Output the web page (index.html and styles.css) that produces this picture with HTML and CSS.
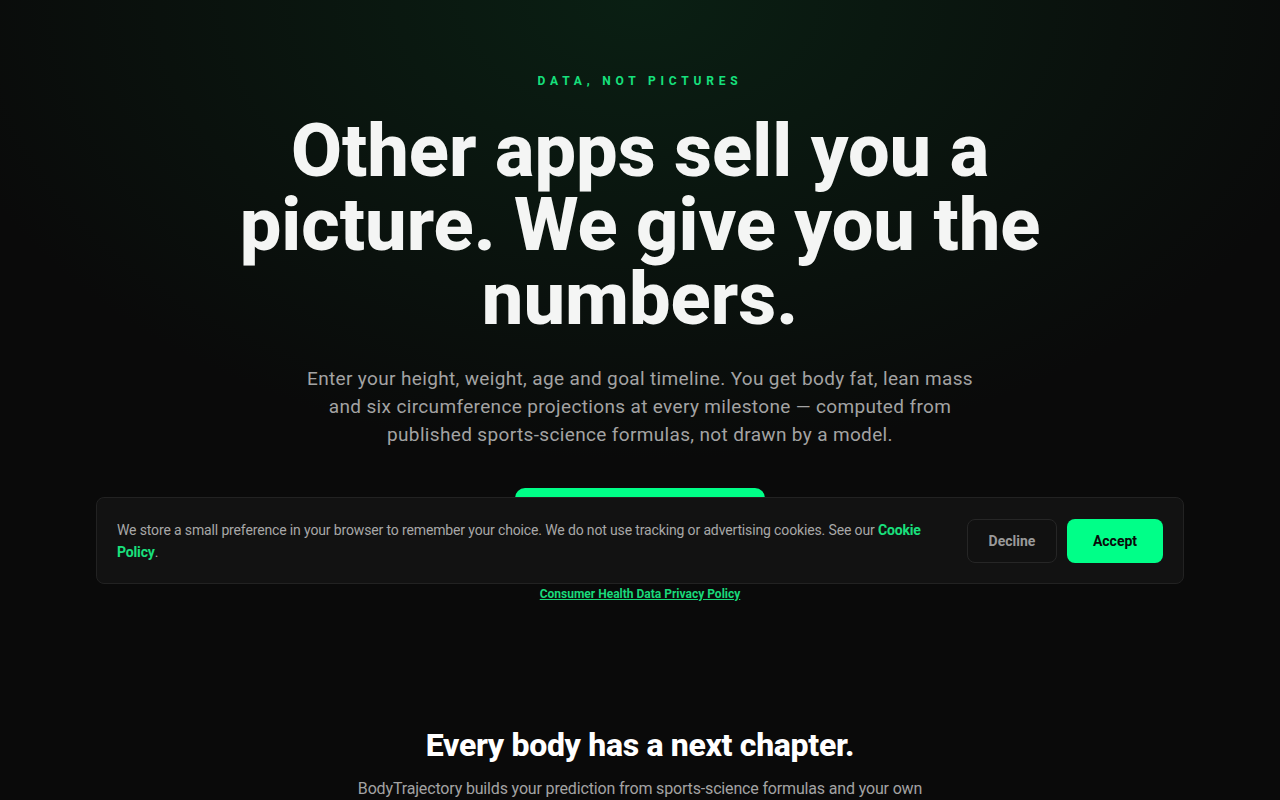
FILE: index.html
```html
<!DOCTYPE html>
<html lang="en">
<head>
<meta charset="utf-8">
<title>BodyTrajectory</title>
<link rel="stylesheet" href="styles.css">
</head>
<body>
<main class="page">
  <section class="hero">
    <p class="eyebrow">DATA, NOT PICTURES</p>
    <h1 class="headline">Other apps sell you a picture. We give you the numbers.</h1>
    <p class="lead">Enter your height, weight, age and goal timeline. You get body fat, lean mass and six circumference projections at every milestone — computed from published sports-science formulas, not drawn by a model.</p>
    <a class="cta" href="#">Get my projection</a>
    <a class="privacy-link" href="#">Consumer Health Data Privacy Policy</a>
  </section>
  <section class="chapter">
    <h2 class="chapter-title">Every body has a next chapter.</h2>
    <p class="chapter-text">BodyTrajectory builds your prediction from sports-science formulas and your own measurements, so every milestone is grounded in numbers you can check.</p>
  </section>
</main>
<div class="cookie">
  <p class="cookie-text">We store a small preference in your browser to remember your choice. We do not use tracking or advertising cookies. See our <a href="#" class="cookie-link">Cookie Policy</a>.</p>
  <div class="cookie-actions">
    <button class="btn btn-decline">Decline</button>
    <button class="btn btn-accept">Accept</button>
  </div>
</div>
</body>
</html>
```
FILE: styles.css
```css
* { box-sizing: border-box; }
html, body {
  margin: 0;
  padding: 0;
  background: #0a0a0a;
  color: #f4f5f4;
  font-family: Roboto, "Liberation Sans", Arial, sans-serif;
}
.page {
  min-height: 800px;
  overflow: hidden;
  background:
    radial-gradient(ellipse 720px 460px at 50% 0%, rgba(10, 52, 28, 0.5), rgba(10, 10, 10, 0) 100%),
    #0a0a0a;
}
.hero {
  display: flex;
  flex-direction: column;
  align-items: center;
  text-align: center;
  padding: 73px 24px 0;
}
.eyebrow {
  margin: 0;
  font-size: 12px;
  line-height: 16px;
  font-weight: 700;
  letter-spacing: 0.4em;
  color: #16e07d;
}
.headline {
  margin: 25px 0 0;
  max-width: 860px;
  font-size: 74px;
  line-height: 74px;
  font-weight: 800;
  letter-spacing: 0;
  color: #f4f5f4;
}
.lead {
  margin: 29px 0 0;
  max-width: 680px;
  font-size: 19px;
  line-height: 28px;
  letter-spacing: 0.35px;
  color: #a3a3a3;
}
.cta {
  margin-top: 39px;
  width: 250px;
  height: 54px;
  border-radius: 10px;
  background: #00ff88;
  color: #0a0a0a;
  font-weight: 700;
  font-size: 16px;
  line-height: 54px;
  text-decoration: none;
}
.privacy-link {
  margin-top: 44px;
  font-size: 12px;
  line-height: 16px;
  font-weight: 700;
  color: #19d97a;
}
.chapter {
  display: flex;
  flex-direction: column;
  align-items: center;
  text-align: center;
  padding: 125px 24px 0;
}
.chapter-title {
  margin: 0;
  font-size: 32px;
  line-height: 36px;
  font-weight: 800;
  letter-spacing: -0.01em;
  color: #ffffff;
}
.chapter-text {
  margin: 14px 0 0;
  max-width: 590px;
  font-size: 16px;
  line-height: 24px;
  color: #a3a3a3;
  letter-spacing: -0.01em;
}
.cookie {
  position: fixed;
  top: 497px;
  left: 96px;
  right: 96px;
  height: 87px;
  display: flex;
  align-items: center;
  justify-content: space-between;
  gap: 32px;
  padding: 0 20px;
  background: #121212;
  border: 1px solid #222;
  border-radius: 8px;
}
.cookie-text {
  margin: 0;
  flex: 1;
  font-size: 14px;
  line-height: 22px;
  letter-spacing: -0.01em;
  color: #a8a8a8;
  text-align: left;
}
.cookie-link {
  color: #19e07d;
  font-weight: 700;
  text-decoration: none;
}
.cookie-actions {
  display: flex;
  gap: 10px;
  flex-shrink: 0;
}
.btn {
  height: 44px;
  border-radius: 8px;
  font-family: inherit;
  font-size: 14px;
  font-weight: 700;
  cursor: pointer;
}
.btn-decline {
  width: 90px;
  background: #111;
  border: 1px solid #262626;
  color: #9a9a9a;
}
.btn-accept {
  width: 96px;
  background: #00ff88;
  border: none;
  color: #0a0a0a;
}
```
